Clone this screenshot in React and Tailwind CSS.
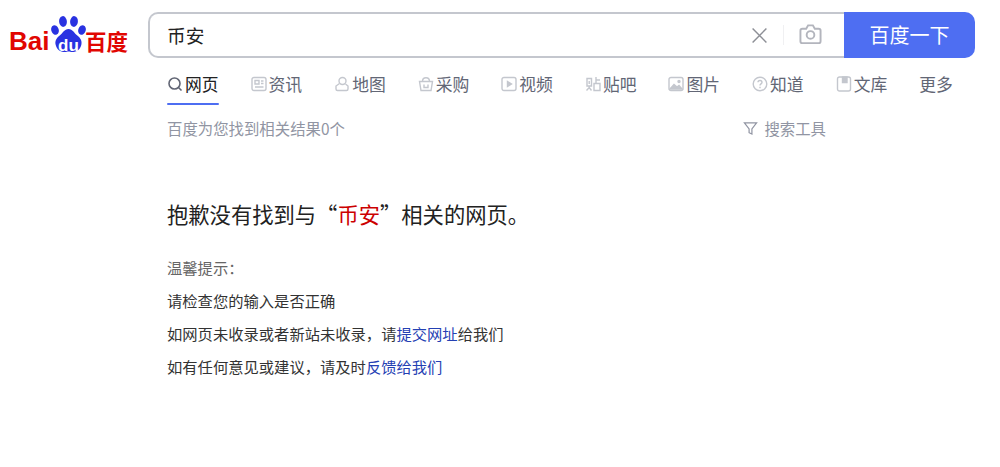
const FONT = "font-['Noto_Sans_CJK_SC','Liberation_Sans',sans-serif]";

const Paw = () => (
  <svg viewBox="0 0 37 38" className="w-[37px] h-[38px]" fill="#2932e1">
    <ellipse cx="13" cy="6.500" rx="3.900" ry="5.400" transform="rotate(-6 13 6.500)" />
    <ellipse cx="24" cy="6.500" rx="3.900" ry="5.400" transform="rotate(6 24 6.500)" />
    <ellipse cx="5" cy="15" rx="3.700" ry="4.900" transform="rotate(-20 5 15)" />
    <ellipse cx="32" cy="15" rx="3.700" ry="4.900" transform="rotate(20 32 15)" />
    <path d="M18.500 14c4.200 0 5.500 4 8.800 6.500 3.400 2.700 5 5.500 4 9.500-1.100 4.500-4.500 7-9 7-1.700 0-2.500-.6-3.800-.6s-2.100.6-3.800.6c-4.500 0-7.900-2.500-9-7-1-4 .6-6.800 4-9.500C13 18 14.300 14 18.500 14z" />
  </svg>
);

const Logo = () => (
  <div className="relative w-[120px] h-[46px] shrink-0 ml-[9px] mt-[14px]">
    <div className="absolute left-[41px] top-[1px]">
      <Paw />
    </div>
    <span className="absolute left-0 top-[12px] text-[26px] leading-[30px] font-bold text-[#e10601] font-['Liberation_Sans',sans-serif]">Bai</span>
    <span className="absolute left-[49px] top-[22px] text-[17px] leading-[20px] font-bold text-white font-['Liberation_Sans',sans-serif]">du</span>
    <span className={`absolute left-[76px] top-[13px] text-[21.500px] leading-[28px] font-bold text-[#e10601] ${FONT}`}>百度</span>
  </div>
);

const IC = ({ children }) => (
  <svg viewBox="0 0 16 16" className="w-[16px] h-[16px] shrink-0" fill="none" stroke="#c4c7ce" strokeWidth="1.4">
    {children}
  </svg>
);

const TABS = [
  { label: '网页', active: true, icon: <svg viewBox="0 0 16 16" className="w-[16px] h-[16px] shrink-0" fill="none" stroke="#626675" strokeWidth="1.600"><circle cx="7.500" cy="7.500" r="5.500" /><path d="M11.500 11.500 14.500 14.500" /></svg> },
  { label: '资讯', icon: <IC><rect x="1" y="1.500" width="14" height="13" rx="2" /><path d="M4 4.500h4V8H4zM10 5h2.500M10 7.500h2.500M4 11h8.500" /></IC> },
  { label: '地图', icon: <IC><circle cx="8.500" cy="5" r="3.500" /><path d="M5.500 7.500 2 10v3c0 1 .5 1.500 1.500 1.500h9c1 0 1.500-.5 1.500-1.500v-3l-2.500-2" /></IC> },
  { label: '采购', icon: <IC><path d="M1.500 5.500h13l-1.500 9H3z" /><path d="M4.500 5.500C4.500 .5 11.500 .5 11.500 5.500M6 8.500v3h4v-3" /></IC> },
  { label: '视频', icon: <IC><rect x="1" y="1.500" width="14" height="13" rx="2" /><path d="M6.500 5.500v5l4-2.500z" fill="#c4c7ce" /></IC> },
  { label: '贴吧', icon: <IC><path d="M2 2.500h4.500v7.500H2zM4.200 5v3M4.200 10v1.500M1.500 14.500l2.700-3 2.300 3M11 1v6M11 4h4M9 7.500h6v7H9z" /></IC> },
  { label: '图片', icon: <IC><rect x="1" y="1.500" width="14" height="13" rx="2" /><path d="M2 13 6 8.500l3 2.500 2-1.500 3 3.500z" fill="#c4c7ce" /><circle cx="11" cy="5.500" r="1" fill="#c4c7ce" /></IC> },
  { label: '知道', icon: <IC><circle cx="8" cy="8" r="6.800" /><path d="M6 6.300C6 3.800 10 3.800 10 6.300 10 8 8 7.800 8 9.500M8 10.800v1.400" /></IC> },
  { label: '文库', icon: <IC><rect x="1.500" y="1" width="13" height="14" rx="2" /><path d="M6.500 1h4.500v5.500H6.500z" fill="#c4c7ce" /></IC> },
  { label: '更多' },
];

const SearchBox = () => (
  <div className="flex w-[827px] h-[46px] mt-[12px] ml-[19px]">
    <div className="flex-1 flex items-center border-2 border-r-0 border-[#c4c7ce] rounded-l-[10px] bg-white pl-[17px] pr-[22px]">
      <span className="flex-1 text-[18.700px] text-[#222222]">币安</span>
      <svg viewBox="0 0 16 16" className="w-[17px] h-[17px]" fill="none" stroke="#8d8f96" strokeWidth="1.400">
        <path d="M1.500 1.500 14.500 14.500M14.500 1.500 1.500 14.500" />
      </svg>
      <div className="w-px h-[20px] bg-[#f0f0f2] mx-[15px]" />
      <svg viewBox="0 0 24 22" className="w-[23px] h-[22px] mt-[-2px]" fill="none" stroke="#b3b5bd" strokeWidth="2">
        <path d="M3.500 5.500h4L9.500 2h5l2 3.500h4c1.200 0 2 .8 2 2v11c0 1.200-.8 2-2 2h-17c-1.200 0-2-.8-2-2v-11c0-1.200.8-2 2-2z" />
        <circle cx="12" cy="12" r="4" />
      </svg>
    </div>
    <div className="w-[131px] flex items-center justify-center bg-[#4e6ef2] rounded-r-[10px] text-white text-[20px]">百度一下</div>
  </div>
);

export default function App() {
  return (
    <div className={`w-[1000px] min-h-[467px] bg-white text-[#222222] ${FONT}`}>
      <div className="flex">
        <Logo />
        <SearchBox />
      </div>

      <div className="ml-[167px]">
        {/* tabs */}
        <div className="flex gap-[32px] mt-[9px]">
          {TABS.map((t) => (
            <div key={t.label} className={`flex items-center gap-[2px] h-[33px] pb-[4px] relative ${t.active ? 'text-[#222222]' : 'text-[#626675]'}`}>
              {t.icon}
              <span className="text-[16.800px] leading-[24px]">{t.label}</span>
              {t.active && <div className="absolute left-0 right-0 bottom-[-3px] h-[2px] bg-[#4e6ef2] rounded-sm" />}
            </div>
          ))}
        </div>

        {/* result count and tools */}
        <div className="flex items-center w-[659px] mt-[16px] text-[15.400px] leading-[20px] text-[#9195a3]">
          <span className="flex-1">百度为您找到相关结果0个</span>
          <svg viewBox="0 0 16 16" className="w-[15px] h-[15px] mr-[6px]" fill="none" stroke="#9195a3" strokeWidth="1.300">
            <path d="M1.500 2h13L9.500 8.500V14l-3-1.500v-4z" />
          </svg>
          <span>搜索工具</span>
        </div>

        <h1 className="mt-[60px] text-[21.300px] leading-[32px] font-normal text-[#222222]">
          抱歉没有找到与“<span className="text-[#cc0000]">币安</span>”相关的网页。
        </h1>

        <div className="mt-[21px] text-[15.300px] leading-[33px] text-[#333333]">
          <p className="text-[#666666]">温馨提示：</p>
          <p>请检查您的输入是否正确</p>
          <p>如网页未收录或者新站未收录，请<span className="text-[#2440b3]">提交网址</span>给我们</p>
          <p>如有任何意见或建议，请及时<span className="text-[#2440b3]">反馈给我们</span></p>
        </div>
      </div>
    </div>
  );
}
